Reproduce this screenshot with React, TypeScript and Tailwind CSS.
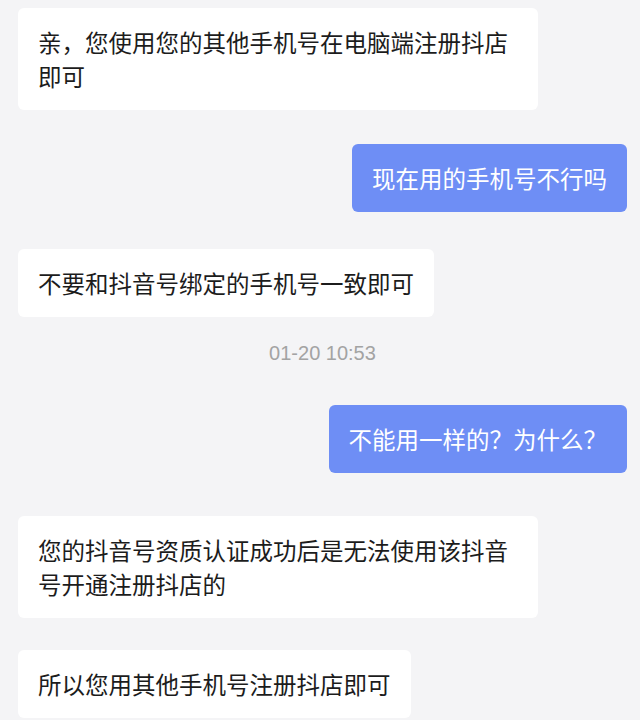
type Msg = {
  kind: "in" | "out" | "time";
  text: string;
  gap: string;
};

const MESSAGES: Msg[] = [
  { kind: "in", text: "亲，您使用您的其他手机号在电脑端注册抖店即可", gap: "mt-[8px]" },
  { kind: "out", text: "现在用的手机号不行吗", gap: "mt-[34px]" },
  { kind: "in", text: "不要和抖音号绑定的手机号一致即可", gap: "mt-[37px]" },
  { kind: "time", text: "01-20 10:53", gap: "mt-[24px]" },
  { kind: "out", text: "不能用一样的？为什么？", gap: "mt-[40px]" },
  { kind: "in", text: "您的抖音号资质认证成功后是无法使用该抖音号开通注册抖店的", gap: "mt-[43px]" },
  { kind: "in", text: "所以您用其他手机号注册抖店即可", gap: "mt-[32px]" },
];

export default function App() {
  return (
    <div className="flex h-[720px] w-[640px] flex-col overflow-hidden bg-[#f4f4f6] pl-[18px] pr-[13px] font-['Noto_Sans_CJK_SC','Noto_Sans',sans-serif]">
      {MESSAGES.map((m, i) => {
        if (m.kind === "time") {
          return (
            <div
              key={i}
              className={`${m.gap} text-center font-['Liberation_Sans',Arial,sans-serif] text-[20px] leading-[24px] text-[#a3a3a3]`}
            >
              {m.text}
            </div>
          );
        }
        const out = m.kind === "out";
        return (
          <div key={i} className={`${m.gap} flex ${out ? "justify-end" : "justify-start"}`}>
            <div
              className={`max-w-[520px] rounded-[6px] px-[20px] py-[17px] text-[23.5px] leading-[34px] ${
                out ? "bg-[#6e8ef5] text-white" : "bg-white text-[#1c1c1c]"
              }`}
            >
              {m.text}
            </div>
          </div>
        );
      })}
    </div>
  );
}
